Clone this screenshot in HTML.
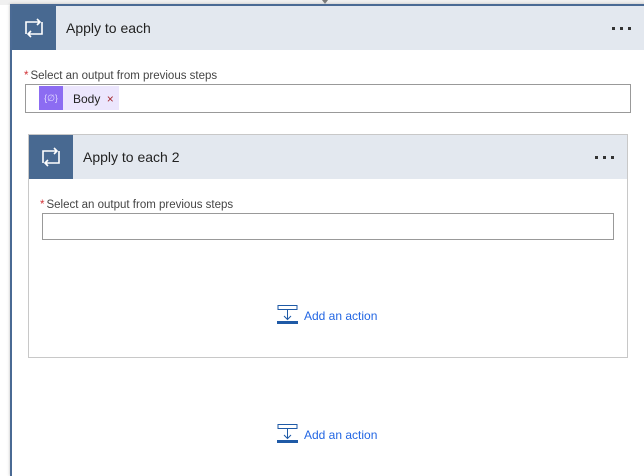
<!DOCTYPE html>
<html><head><style>
body{margin:0;width:644px;height:472px;background:#fff;font-family:"Liberation Sans",sans-serif;position:relative;overflow:hidden}
.a{position:absolute}
.lbl{font-size:11.5px;color:#444}
.lbl b{color:#d13438;font-weight:normal;margin-right:2px}
.add{font-size:12px;color:#2266e3}
.d{position:absolute;width:3px;height:3px;background:#333}
</style></head><body>
<div class="a" style="left:0;top:0;width:644px;height:5px;background:#f0f0f0"></div>
<div class="a" style="left:322px;top:0;width:6px;height:4px;background:#777;clip-path:polygon(0 0,100% 0,50% 100%)"></div>
<div class="a" style="left:10px;top:4px;width:640px;height:470px;border-top:2px solid #4a6a94;border-left:2px solid #4a6a94;box-shadow:0 0 3px #bbb"></div>
<div class="a" style="left:12px;top:6px;width:632px;height:44px;background:#e3e8ef"></div>
<div class="a" style="left:12px;top:6px;width:44px;height:44px;background:#486991"></div>
<svg class="a" style="left:22px;top:17px" width="24" height="22" viewBox="0 0 24 22" fill="none" stroke="#fff" stroke-width="1.6"><path d="M4 17V5h14M15 2l3 3-3 3M20 5v12H6M9 14l-3 3 3 3"/></svg>
<div class="a" style="left:66px;top:20px;font-size:14px;color:#222">Apply to each</div>
<div class="d" style="left:612px;top:27px"></div><div class="d" style="left:620px;top:27px"></div><div class="d" style="left:628px;top:27px"></div>
<div class="a lbl" style="left:24px;top:70px"><b>*</b>Select an output from previous steps</div>
<div class="a" style="left:25px;top:84px;width:604px;height:27px;border:1px solid #999"></div>
<div class="a" style="left:39px;top:86px;width:80px;height:24px;background:#ece6fd"></div>
<div class="a" style="left:39px;top:86px;width:24px;height:24px;background:#8c6cf2;color:#e0d8ff;font-size:9px;text-align:center;line-height:24px">{∅}</div>
<div class="a" style="left:73px;top:92px;font-size:12px;color:#222">Body <span style="color:#a4262c;margin-left:3px">×</span></div>
<div class="a" style="left:28px;top:134px;width:598px;height:222px;border:1px solid #c8c8c8"></div>
<div class="a" style="left:29px;top:135px;width:598px;height:44px;background:#e3e8ef"></div>
<div class="a" style="left:29px;top:135px;width:44px;height:44px;background:#486991"></div>
<svg class="a" style="left:39px;top:146px" width="24" height="22" viewBox="0 0 24 22" fill="none" stroke="#fff" stroke-width="1.6"><path d="M4 17V5h14M15 2l3 3-3 3M20 5v12H6M9 14l-3 3 3 3"/></svg>
<div class="a" style="left:83px;top:149px;font-size:14px;color:#222">Apply to each 2</div>
<div class="d" style="left:595px;top:156px"></div><div class="d" style="left:603px;top:156px"></div><div class="d" style="left:611px;top:156px"></div>
<div class="a lbl" style="left:40px;top:199px"><b>*</b>Select an output from previous steps</div>
<div class="a" style="left:42px;top:213px;width:570px;height:25px;border:1px solid #999"></div>
<svg class="a" style="left:277px;top:305px" width="21" height="20" viewBox="0 0 21 20" fill="none"><rect x="1" y="0.5" width="19" height="4" stroke="#1f5aa6"/><path d="M10.5 5v9M7 11l3.5 3.5L14 11" stroke="#1f5aa6"/><rect x="0" y="16" width="21" height="3" fill="#1f5aa6"/></svg>
<div class="a add" style="left:304px;top:309px">Add an action</div>
<svg class="a" style="left:277px;top:424px" width="21" height="20" viewBox="0 0 21 20" fill="none"><rect x="1" y="0.5" width="19" height="4" stroke="#1f5aa6"/><path d="M10.5 5v9M7 11l3.5 3.5L14 11" stroke="#1f5aa6"/><rect x="0" y="16" width="21" height="3" fill="#1f5aa6"/></svg>
<div class="a add" style="left:304px;top:428px">Add an action</div>
</body></html>
